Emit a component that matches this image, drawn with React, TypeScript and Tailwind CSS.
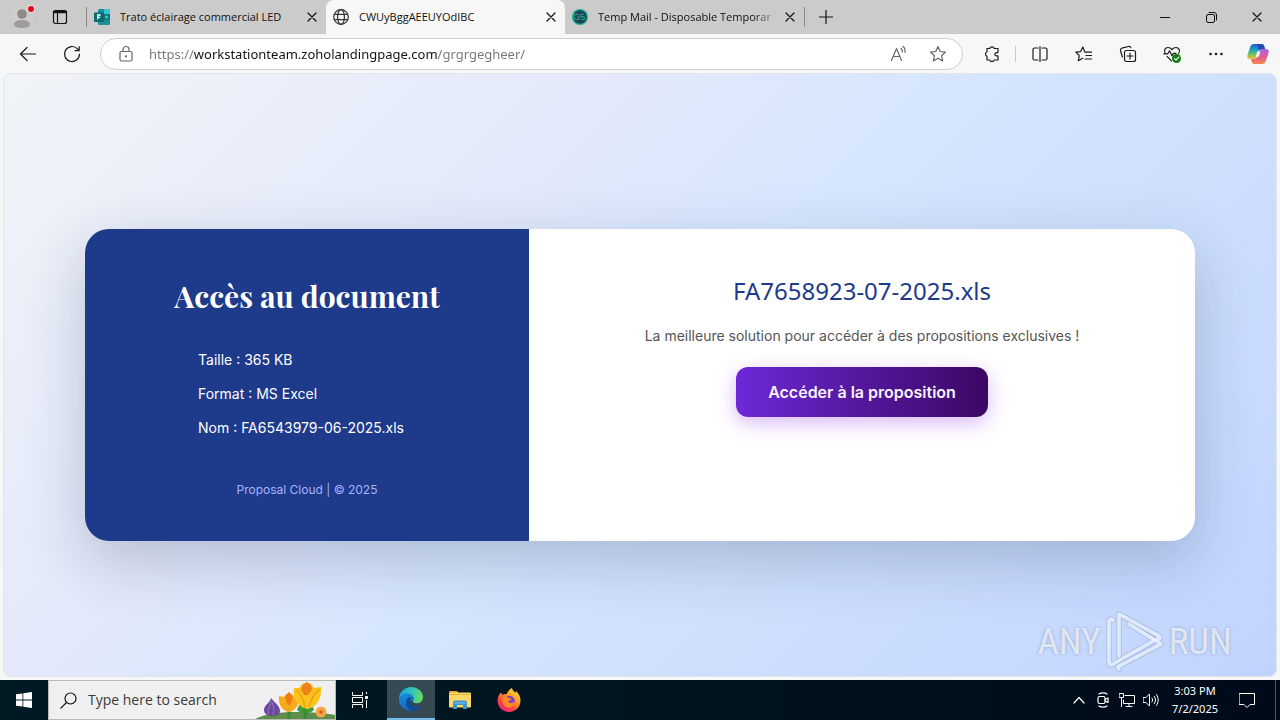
import React from "react";

type IconProps = { className?: string; children: React.ReactNode; size?: number };

const Icon: React.FC<IconProps> = ({ className = "", children, size = 20 }) => (
  <svg
    width={size}
    height={size}
    viewBox={`0 0 ${size} ${size}`}
    fill="none"
    stroke="currentColor"
    strokeWidth={1.2}
    strokeLinecap="round"
    strokeLinejoin="round"
    className={`shrink-0 ${className}`}
    aria-hidden="true"
  >
    {children}
  </svg>
);

const CloseIcon = () => (
  <Icon size={10}>
    <path d="M1 1l8 8M9 1L1 9" />
  </Icon>
);

const FormsIcon = () => (
  <svg width="16" height="16" viewBox="0 0 16 16" className="shrink-0" aria-hidden="true">
    <rect x="4" y="0" width="12" height="16" rx="1.5" fill="#1a8f96" />
    <path d="M10 0h4.500A1.500 1.500 0 0 1 16 1.500V5h-6z" fill="#37c6d0" />
    <rect x="10" y="5" width="6" height="6" fill="#14767d" />
    <circle cx="12.600" cy="8" r="1.600" fill="#37c6d0" />
    <rect x="0" y="3.500" width="10" height="9.500" rx="1" fill="#036c70" />
    <path d="M3.700 10.500V6h3M3.700 8.300h2.600" stroke="#fff" strokeWidth="1.300" fill="none" />
  </svg>
);

const GlobeIcon = () => (
  <Icon size={16} className="text-[#333]">
    <circle cx="8" cy="8" r="7.300" />
    <ellipse cx="8" cy="8" rx="3.400" ry="7.300" />
    <path d="M1.500 5.300h13M1.500 10.700h13" />
  </Icon>
);

const TempMailIcon = () => (
  <svg width="16" height="16" viewBox="0 0 16 16" className="shrink-0" aria-hidden="true">
    <circle cx="8" cy="8" r="8" fill="#14b08c" />
    <circle cx="8" cy="8" r="6.700" fill="#1c4355" />
    <path
      d="M7 5.300H4.500a1.500 1.500 0 0 0 0 5.200H7V8H5M12 5.300H9.700a1.300 1.300 0 0 0 0 2.600h1.600a1.300 1.300 0 0 1 0 2.600H9"
      stroke="#2fa08e"
      strokeWidth="1.100"
      fill="none"
    />
  </svg>
);

const CopilotIcon = () => (
  <svg width="22" height="20" viewBox="0 0 22 20" className="shrink-0" aria-hidden="true">
    <defs>
      <linearGradient id="cop-a" x1="0" y1="0" x2="0" y2="1">
        <stop offset="0" stopColor="#1b5fd0" />
        <stop offset="0.400" stopColor="#1fa3c4" />
        <stop offset="0.700" stopColor="#7cc35a" />
        <stop offset="1" stopColor="#f6c22c" />
      </linearGradient>
      <linearGradient id="cop-b" x1="0" y1="0" x2="0" y2="1">
        <stop offset="0" stopColor="#a566e6" />
        <stop offset="0.500" stopColor="#e4569a" />
        <stop offset="1" stopColor="#f78748" />
      </linearGradient>
    </defs>
    <path d="M7 0h7.500c1.600 0 2.300 1 2.800 2.600L18 5h-3c-2 0-3 1-3.500 2.700L9.800 13c-.5 1.500-1.400 2-2.800 2H3c-2.500 0-3.200-1.700-2.600-3.800L3.200 3C3.900 1 5 0 7 0z" fill="url(#cop-a)" />
    <path d="M15 20H7.500c-1.600 0-2.300-1-2.800-2.600L4 15h3c2 0 3-1 3.500-2.700L12.200 7c.5-1.500 1.400-2 2.800-2h4c2.500 0 3.200 1.700 2.600 3.800L18.800 17c-.7 2-1.800 3-3.800 3z" fill="url(#cop-b)" />
    <path d="M10.300 7.500h3.200l-1.700 5.200H8.600z" fill="#f7f7f7" />
    <path d="M10 0h4.500c1.600 0 2.300 1 2.800 2.600L18 5h-3c-1.500 0-2.300.5-3 1.500z" fill="#2149b8" />
  </svg>
);

type TabProps = { title: string; icon: React.ReactNode; active?: boolean; fade?: boolean };

const Tab: React.FC<TabProps> = ({ title, icon, active, fade }) => (
  <div
    className={`flex h-full w-[239px] min-w-0 items-center pr-1 pl-[7px] ${
      active ? "rounded-t-lg bg-[#f7f7f7]" : ""
    }`}
  >
    <button className="flex min-w-0 flex-1 items-center gap-[10px] text-left">
      {icon}
      <span
        className={`min-w-0 flex-1 text-[11px] leading-4 whitespace-nowrap text-[#111] ${
          fade ? "mask-r-from-85% mask-r-to-100%" : ""
        }`}
      >
        {title}
      </span>
    </button>
    <button aria-label={`Close ${title}`} className="flex h-5 w-5 items-center justify-center">
      <CloseIcon />
    </button>
  </div>
);

const TabBar = () => (
  <header className="flex h-[34px] items-center bg-[#cbcbcb] text-[#111]">
    <button aria-label="Profile" className="flex h-full w-11 items-center justify-center">
      <svg width="26" height="26" viewBox="0 0 26 26" aria-hidden="true">
        <circle cx="13" cy="13" r="11" fill="#d0cecc" />
        <circle cx="13" cy="10" r="4.800" fill="#8f8b88" />
        <path d="M5 20.500c0-3 3-4.500 8-4.500s8 1.500 8 4.500c0 2-3.500 3.500-8 3.500s-8-1.500-8-3.500z" fill="#a09c99" />
        <circle cx="22" cy="5" r="4" fill="#ecd8da" />
        <circle cx="22" cy="5" r="3" fill="#e00b1c" />
      </svg>
    </button>
    <button aria-label="Workspaces" className="flex h-full w-8 items-center justify-center">
      <Icon size={16}>
        <rect x="1.500" y="1.500" width="13" height="13" rx="2" />
        <path d="M2 3h12" strokeWidth="2.500" />
        <path d="M5.500 4v10" />
      </Icon>
    </button>
    <span className="ml-[10px] h-5 w-px bg-[#8a8a8a]" />
    <nav aria-label="Tabs" className="flex h-full min-w-0 items-center">
      <Tab title="Trato éclairage commercial LED" icon={<FormsIcon />} />
      <Tab title="CWUyBggAEEUYOdIBC" icon={<GlobeIcon />} active />
      <Tab title="Temp Mail - Disposable Temporar" icon={<TempMailIcon />} fade />
    </nav>
    <span className="h-5 w-px bg-[#8a8a8a]" />
    <button aria-label="New tab" className="flex h-full w-[42px] items-center justify-center">
      <Icon size={14}>
        <path d="M7 .5v13M.5 7h13" />
      </Icon>
    </button>
    <div className="ml-auto flex h-full">
      <button aria-label="Minimize" className="flex w-[46px] items-center justify-center">
        <Icon size={10}>
          <path d="M0 5.500h10" strokeWidth="1" />
        </Icon>
      </button>
      <button aria-label="Restore" className="flex w-[46px] items-center justify-center">
        <Icon size={11}>
          <rect x="0.500" y="2.500" width="8" height="8" rx="1.500" strokeWidth="1" />
          <path d="M3 .5h5a2.500 2.500 0 0 1 2.500 2.500v5" strokeWidth="1" />
        </Icon>
      </button>
      <button aria-label="Close window" className="flex w-[46px] items-center justify-center">
        <CloseIcon />
      </button>
    </div>
  </header>
);

type ToolButtonProps = { label: string; children: React.ReactNode };

const ToolButton: React.FC<ToolButtonProps> = ({ label, children }) => (
  <button aria-label={label} className="flex h-8 w-11 shrink-0 items-center justify-center">
    {children}
  </button>
);

const Toolbar = () => (
  <div className="flex h-[39px] items-center bg-[#f7f7f7] pl-[6px] text-[#1b1b1b]">
    <ToolButton label="Back">
      <Icon>
        <path d="M17.500 10H2.500M9 3.500L2.500 10l6.500 6.500" />
      </Icon>
    </ToolButton>
    <ToolButton label="Refresh">
      <Icon>
        <path d="M17.500 10a7.500 7.500 0 1 1-2-5.100L17 6.500M17.200 2.500v4.200H13" />
      </Icon>
    </ToolButton>
    <div className="ml-[6px] flex h-8 min-w-0 flex-1 items-center rounded-full border border-[#d0d0d0] bg-white pr-[14px] pl-4">
      <Icon size={18} className="text-[#666]">
        <rect x="3" y="6.500" width="12" height="9.500" rx="1.500" />
        <path d="M6 6.500V4.500a3 3 0 0 1 6 0v2" />
        <circle cx="9" cy="11.300" r="0.500" fill="currentColor" />
      </Icon>
      <input
        aria-label="Address"
        defaultValue="https://workstationteam.zoholandingpage.com/grgrgegheer/"
        className="ml-[14px] min-w-0 flex-1 bg-[linear-gradient(90deg,#767676_45px,#111_45px,#111_289px,#767676_289px)] bg-clip-text font-['Noto_Sans',sans-serif] text-[13px] leading-5 text-transparent outline-none"
      />
      <button aria-label="Read aloud" className="mr-5 text-[#666]">
        <Icon size={18}>
          <path d="M1.500 15.500L6.500 3.500l5 12M3.300 11.500h6.400" />
          <path d="M11 3.500c1 .8 1.500 2 1.300 3.500M13 1.500c1.800 1.500 2.500 3.500 2 6" />
        </Icon>
      </button>
      <button aria-label="Add to favorites" className="text-[#666]">
        <Icon size={20}>
          <path d="M10 2.500l2.200 5 5.300.6-4 3.600 1.200 5.300L10 14.300 5.300 17l1.200-5.300-4-3.600 5.300-.6z" />
        </Icon>
      </button>
    </div>
    <div className="ml-2 flex items-center pr-[2px]">
      <ToolButton label="Extensions">
        <Icon>
          <path d="M4 4.500h2.800a2.300 2.300 0 0 1 4.400 0H15v3.700a.8.800 0 0 1-1 .6 1.600 1.600 0 1 0 0 3 .8.800 0 0 1 1 .6v3.600h-3.800a2.300 2.300 0 0 1-4.400 0H4v-3.800a2.200 2.200 0 0 1 0-4.200z" />
        </Icon>
      </ToolButton>
      <span className="mr-[2px] h-4 w-px bg-[#c8c8c8]" />
      <ToolButton label="Split screen">
        <Icon>
          <path d="M8 4H4.500A1.500 1.500 0 0 0 3 5.500v9A1.500 1.500 0 0 0 4.500 16H8M12 4h3.500A1.500 1.500 0 0 1 17 5.500v9a1.500 1.500 0 0 1-1.500 1.500H12M10 2.500v15" />
        </Icon>
      </ToolButton>
      <ToolButton label="Favorites">
        <Icon>
          <path d="M17.500 8.200H11L8.800 3 6.600 7.600l-4.800.6 3.500 3.500-1 5 4.500-2.500M12 11.500h5.500M11 15h6.500" />
        </Icon>
      </ToolButton>
      <ToolButton label="Collections">
        <Icon>
          <rect x="6.500" y="6.500" width="11" height="11" rx="2" />
          <path d="M12 9v6M9 12h6M4.300 13L2.500 6.500a2 2 0 0 1 1.300-2.300L10.500 2.500a2 2 0 0 1 2.300 1.300" />
        </Icon>
      </ToolButton>
      <ToolButton label="Browser essentials">
        <Icon>
          <path d="M3.300 9.500C1.500 6.500 3 3.500 6 3.500c1.800 0 3 .8 4 2.200 1-1.400 2.200-2.200 4-2.200 3 0 4.500 3 2.700 6M1.800 9.800h4l1.700-3 2.500 5 1.500-2.500h2.500M5 12.300l4.500 4.500" />
          <circle cx="14.500" cy="14.500" r="4.500" fill="#107c10" stroke="none" />
          <path d="M12.500 14.600l1.500 1.500 2.700-2.900" stroke="#fff" />
        </Icon>
      </ToolButton>
      <ToolButton label="Settings and more">
        <Icon>
          <g fill="currentColor" stroke="none">
            <circle cx="4.500" cy="10" r="1.300" />
            <circle cx="10" cy="10" r="1.300" />
            <circle cx="15.500" cy="10" r="1.300" />
          </g>
        </Icon>
      </ToolButton>
      <button aria-label="Copilot" className="flex w-10 shrink-0 items-center justify-center">
        <CopilotIcon />
      </button>
    </div>
  </div>
);

const details = ["Taille : 365 KB", "Format : MS Excel", "Nom : FA6543979-06-2025.xls"];

const ProposalCard = () => (
  <section className="flex w-full max-w-[1110px] overflow-hidden rounded-3xl bg-white font-[Inter,sans-serif] shadow-[0_20px_60px_rgba(20,35,70,0.22)]">
    <div className="flex w-2/5 flex-col items-center bg-[#1e3a8a] px-10 pt-12 pb-10">
      <h1 className="font-['Playfair_Display','Liberation_Serif',serif] text-3xl leading-[38px] font-bold text-white">
        Accès au document
      </h1>
      <ul className="mt-[34px] flex flex-col gap-3 pr-3 text-sm leading-[22px] text-white">
        {details.map((line) => (
          <li key={line}>{line}</li>
        ))}
      </ul>
      <p className="mt-10 text-xs leading-[22px] text-[#a5b4fc]">Proposal Cloud | © 2025</p>
    </div>
    <div className="flex w-3/5 flex-col items-center px-10 pt-11 pb-10">
      <h2 className="font-['Noto_Sans',sans-serif] text-2xl leading-9 text-[#1e3a8a]">
        FA7658923-07-2025.xls
      </h2>
      <p className="mt-4 text-sm leading-[22px] text-[#555]">
        La meilleure solution pour accéder à des propositions exclusives !
      </p>
      <button className="mt-5 rounded-xl bg-linear-to-r from-[#6d28d9] to-[#3b0764] px-8 py-[13px] text-base leading-6 font-semibold text-[#f8f2ff] shadow-[0_6px_20px_rgba(147,51,234,0.35)]">
        Accéder à la proposition
      </button>
    </div>
  </section>
);

const Watermark = () => (
  <div
    aria-label="ANY RUN"
    className="absolute right-[44px] bottom-1 flex items-center gap-1 font-['Liberation_Sans_Narrow','Roboto_Condensed',Roboto,sans-serif] text-[37px] leading-none text-white/70 text-shadow-[0_0_3px_rgba(90,110,150,0.5)]"
  >
    <span>ANY</span>
    <svg width="60" height="62" viewBox="0 0 60 62" fill="none" aria-hidden="true">
      <g strokeLinejoin="round" strokeLinecap="round">
        <g stroke="#8fa3c8" strokeOpacity="0.350" strokeWidth="6">
          <path d="M8 10c-2-2-4 0-4 3v39c0 3 2 3 4 2L50 30" />
          <path d="M14 46V4l40 22c2 2 1 4-2 3" />
          <path d="M14 59c-2-2-1-3 2-4l40-21L24 14" />
        </g>
        <g stroke="#e9f0fd" strokeOpacity="0.850" strokeWidth="3.500">
          <path d="M8 10c-2-2-4 0-4 3v39c0 3 2 3 4 2L50 30" />
          <path d="M14 46V4l40 22c2 2 1 4-2 3" />
          <path d="M14 59c-2-2-1-3 2-4l40-21L24 14" />
        </g>
      </g>
    </svg>
    <span>RUN</span>
  </div>
);

const Flowers = () => (
  <svg width="80" height="38" viewBox="0 0 80 38" className="shrink-0" aria-hidden="true">
    <path d="M0 38c10-5 24-7 40-7s30 1 40 3v4z" fill="#5d8f4a" />
    <path d="M42 29c2-6 5-8 8-8s8 4 9 8l-9 6z" fill="#3f9a3c" />
    <path d="M16 17c4 5 9 8 9 13 0 4-4 5-8 5s-8-2-8-6c0-5 6-7 7-12z" fill="#6b4a9c" />
    <path d="M16 19c0 6-3 8-3 14M17 21c2 5 2 8 1 13" stroke="#9374c4" fill="none" />
    <path d="M34 28v10M50 24v14" stroke="#3b8b35" strokeWidth="3" />
    <path d="M24 15l5 1 2-3 3 3 3-3 2 3 5-2c1 8-2 15-10 17-7-1-11-8-10-16z" fill="#f7ab1c" />
    <path d="M31 14l3-3 3 3 1 3-3 7h-2l-3-7z" fill="#ee7d14" />
    <path d="M39 7l5 0 3-4 4 2 4-3 4 5 7-1c1 10-3 20-14 22C43 26 37 17 39 7z" fill="#fcc31f" />
    <path d="M48 3l4-2 4 3 1 5-4 5h-4l-3-5z" fill="#ee8218" />
    <path d="M41 9c5 4 8 10 9 18M65 8c-6 4-9 10-11 18" stroke="#eba015" strokeWidth="1.500" fill="none" />
    <circle cx="66" cy="31" r="5.500" fill="#f5a64a" />
    <circle cx="66" cy="31" r="2" fill="#d9681d" />
  </svg>
);

const EdgeIcon = () => (
  <svg width="24" height="24" viewBox="0 0 24 24" aria-hidden="true">
    <defs>
      <linearGradient id="edge-a" x1="0" y1="0.300" x2="1" y2="0.500">
        <stop offset="0" stopColor="#1f9fe0" />
        <stop offset="0.550" stopColor="#33c6b4" />
        <stop offset="1" stopColor="#68dd5c" />
      </linearGradient>
      <linearGradient id="edge-b" x1="0" y1="0" x2="0.600" y2="1">
        <stop offset="0" stopColor="#1a8fe0" />
        <stop offset="1" stopColor="#1160b8" />
      </linearGradient>
    </defs>
    <path d="M0 12C0 5 5.500 0 12 0s12 4.600 12 10c0 4-3 6.300-6.500 6.300-3 0-4.300-1.200-3.500-2.300 2-3.500-.5-6.500-4-6.500C5 7.500 1 9 0 12z" fill="url(#edge-a)" />
    <path d="M0 12c.8-3.500 4-5.500 8-5.500 3.500 0 6.500 2 6.500 4.500 0 1.500-.7 2-.7 3C10 12 8 15.500 10.500 19c2.500 3 7.500 3 11.500-.5C20 22 16 24 12 24 5 24-.3 18.500 0 12z" fill="url(#edge-b)" />
    <path d="M9 11c-3.500 3.500-2 10.500 4 13 4 .2 7.500-2 9-5.500-5 2.500-9.500 1-10.500-2-.8-2-.3-4 1-5.500-1-1-2.500-.8-3.500 0z" fill="#134a94" />
  </svg>
);

const FolderIcon = () => (
  <svg width="22" height="20" viewBox="0 0 22 20" aria-hidden="true">
    <path d="M0 2.500C0 1.700.6 1 1.500 1H8l2 2.500H0z" fill="#e8a33a" />
    <rect x="0" y="2.500" width="22" height="15" rx="1" fill="#fbd867" />
    <path d="M0 4.500h22" stroke="#e9b23f" />
    <path d="M4 19v-6.500a2 2 0 0 1 2-2h10a2 2 0 0 1 2 2V19h-4v-4H8v4z" fill="#3f96d2" />
    <path d="M5.500 13h11" stroke="#7cc3ee" />
  </svg>
);

const FirefoxIcon = () => (
  <svg width="24" height="24" viewBox="0 0 24 24" aria-hidden="true">
    <defs>
      <linearGradient id="ff-a" x1="0.900" y1="0" x2="0.200" y2="1">
        <stop offset="0" stopColor="#fff04a" />
        <stop offset="0.400" stopColor="#ff9a1f" />
        <stop offset="0.750" stopColor="#ff3b4b" />
        <stop offset="1" stopColor="#e01f86" />
      </linearGradient>
    </defs>
    <path d="M4 4.500l1.500 2.300C7 6 8.500 6 9.500 6.300 10.500 4 12 1.500 15 0c.3 2 1.800 3.300 3.500 4.800L19 3c3 3 4.500 6 4.500 9.500C23.500 19 18.500 24 12 24S.5 19 .5 12.500C.5 9 2 6.500 4 4.500z" fill="url(#ff-a)" />
    <circle cx="12.500" cy="13" r="5.300" fill="#7a3fd1" />
    <path d="M5.500 9.500c2-1.500 4-1.300 6 .2 1 .8 2.500.5 3 1.300-.5 1.500-3 1.500-3.200 2.800.7 2 4.200 1.500 6-.3-.3 4-3 6-6 6-4 0-6.800-4-5.800-10z" fill="#ff8b22" />
  </svg>
);

const Taskbar = () => (
  <footer className="flex h-10 items-center bg-linear-to-r from-[#001a24] via-[#00141f] to-[#000a19] text-white">
    <button aria-label="Start" className="flex h-full w-12 items-center justify-center">
      <svg width="16" height="16" viewBox="0 0 16 16" fill="#fff" aria-hidden="true">
        <path d="M0 2.300L6.500 1.400v6.200H0zM7.300 1.300L16 0v7.600H7.300zM0 8.400h6.500v6.200L0 13.700zM7.300 8.400H16V16l-8.700-1.300z" />
      </svg>
    </button>
    <label className="flex h-full w-72 items-center border border-[#b9b9b9] bg-[#f0f0f0] pl-[11px]">
      <Icon size={17} className="text-[#111]">
        <circle cx="10.500" cy="6.500" r="5.500" />
        <path d="M6.500 10.500L.8 16.200" />
      </Icon>
      <input
        type="search"
        aria-label="Search"
        placeholder="Type here to search"
        className="ml-[11px] min-w-0 flex-1 text-sm outline-none placeholder:text-[#3a3a3a]"
      />
      <Flowers />
    </label>
    <button aria-label="Task view" className="flex h-full w-12 items-center justify-center">
      <Icon size={16}>
        <g strokeWidth="1" strokeLinecap="butt">
          <path d="M.5 0v3.500h10V0M.5 16v-3.500h10V16M14.500 0v2M14.500 8v8" />
          <rect x="0.500" y="5.500" width="10" height="5" />
          <rect x="13.500" y="4.500" width="2" height="2" fill="currentColor" />
        </g>
      </Icon>
    </button>
    <button
      aria-label="Microsoft Edge"
      className="ml-[3px] flex h-full w-12 items-center justify-center border-b-2 border-[#76b9ed] bg-[#364a53]"
    >
      <EdgeIcon />
    </button>
    <button aria-label="File Explorer" className="ml-px flex h-full w-12 items-center justify-center">
      <FolderIcon />
    </button>
    <button aria-label="Firefox" className="ml-px flex h-full w-12 items-center justify-center">
      <FirefoxIcon />
    </button>
    <div className="ml-auto flex h-full items-center">
      <button aria-label="Show hidden icons" className="flex w-6 justify-center">
        <Icon size={12}>
          <path d="M1 9l5-5.500L11 9" />
        </Icon>
      </button>
      <button aria-label="Meet now" className="flex w-6 justify-center">
        <Icon size={16}>
          <rect x="3" y="4.500" width="7" height="7" rx="1.500" />
          <path d="M10 7.500l3-1.500v4.500L10 9M4 2c2-1.500 6-1.500 8 0M4 14c2 1.500 6 1.500 8 0" />
        </Icon>
      </button>
      <button aria-label="Network" className="flex w-6 justify-center">
        <Icon size={16}>
          <path d="M6 3.500h9.500v8H4.500V8M10 11.500v3M7 14.500h6" strokeWidth="1" />
          <path d="M.5 1.500h4v4h-4zM2.500 5.500v9" strokeWidth="1" />
        </Icon>
      </button>
      <button aria-label="Volume" className="flex w-6 justify-center">
        <Icon size={16}>
          <path d="M.5 5.500H3L6.500 2v12L3 10.500H.5zM9 6c.8 1.200.8 2.800 0 4M11.300 4.200c1.600 2.300 1.600 5.300 0 7.600M13.500 2.500c2.300 3.300 2.300 7.700 0 11" strokeWidth="1" />
        </Icon>
      </button>
      <button className="flex w-16 flex-col items-center font-['Noto_Sans',sans-serif] text-[11px] leading-[18px]">
        <time>3:03 PM</time>
        <time>7/2/2025</time>
      </button>
      <button aria-label="Notifications" className="flex w-10 justify-center">
        <Icon size={16}>
          <path d="M.5 1.500h15v11H11l-3 3-3-3H.5z" strokeWidth="1" />
        </Icon>
      </button>
      <button aria-label="Show desktop" className="ml-2 h-10 w-[5px] border-l border-[#4a5560]" />
    </div>
  </footer>
);

export default function App() {
  return (
    <div className="flex min-h-screen flex-col bg-[#f7f7f7] font-['Segoe_UI','Open_Sans',sans-serif]">
      <TabBar />
      <Toolbar />
      <main className="relative mx-[3px] mb-[3px] flex flex-1 items-center justify-center rounded-lg border border-[#e2e6ea] bg-[linear-gradient(135deg,#f0f4f8,#e4e9fb_32%,#d6e6fd_50%,#c1d4ff)] px-20 pt-[60px] pb-10">
        <ProposalCard />
        <Watermark />
      </main>
      <Taskbar />
    </div>
  );
}
